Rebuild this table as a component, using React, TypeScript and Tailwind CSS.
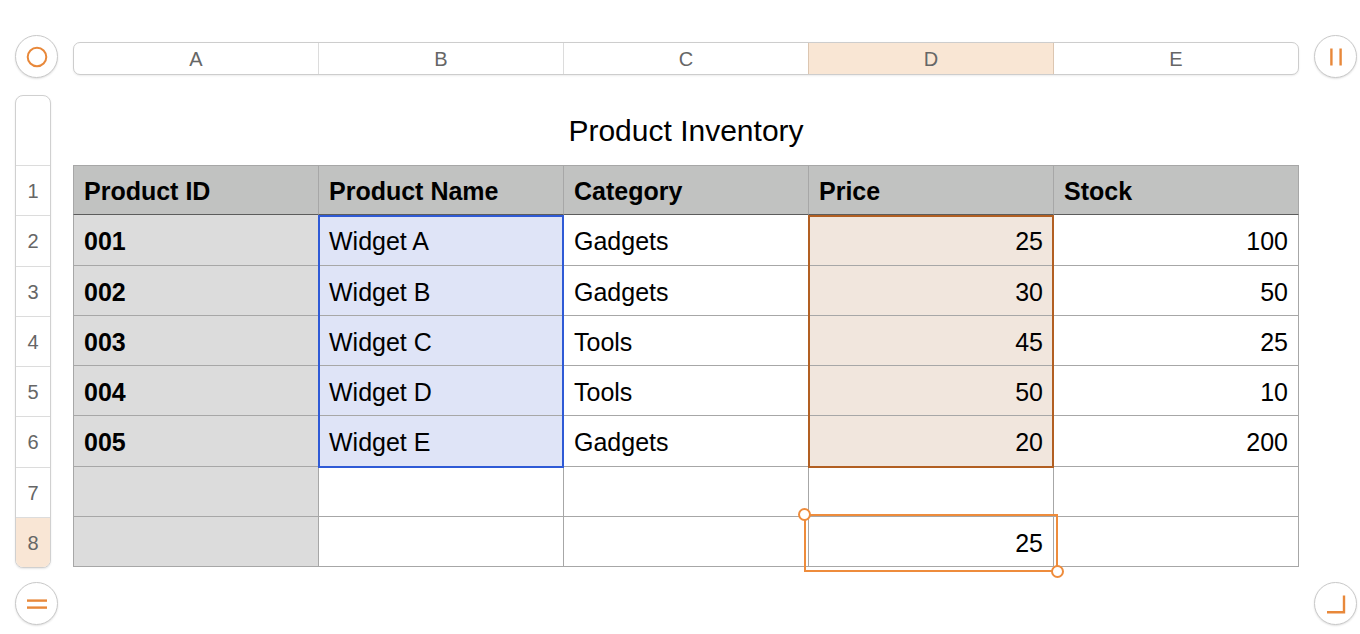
import React from "react";

const ORANGE = "#e8883a";

type Cell = string | number | null;

const data: Cell[][] = [
  ["Product ID", "Product Name", "Category", "Price", "Stock"],
  ["001", "Widget A", "Gadgets", 25, 100],
  ["002", "Widget B", "Gadgets", 30, 50],
  ["003", "Widget C", "Tools", 45, 25],
  ["004", "Widget D", "Tools", 50, 10],
  ["005", "Widget E", "Gadgets", 20, 200],
  [null, null, null, null, null],
  [null, null, null, 25, null],
];

const rowH = ["h-[50px]", "h-[51px]", "h-[50px]", "h-[50px]", "h-[50px]", "h-[51px]", "h-[50px]", "h-[50px]"];

function CircleButton({ children }: { children: React.ReactNode }) {
  return (
    <div className="w-[43px] h-[43px] rounded-full border border-[#c9c9c9] bg-white shadow-[0_1px_2px_rgba(0,0,0,0.12)] flex items-center justify-center shrink-0">
      {children}
    </div>
  );
}

function cellClass(r: number, c: number): string {
  const base = "border-r border-[#a7a7a7] flex items-center px-[10px] pt-[3px] text-[25px] text-black leading-none";
  let cls = base + (c === 0 ? " w-[246px] border-l" : " w-[245px]");
  if (r === 0) {
    cls += " bg-[#c1c2c1] font-bold border-b border-b-[#5c5c5c]";
  } else {
    cls += " border-b";
    if (c === 0) cls += " bg-[#dcdcdc] font-bold";
    else if (c === 1 && r <= 5) cls += " bg-[#dfe4f7] text-[#111]";
    else if (c === 3 && r <= 5) cls += " bg-[#f1e6dd]";
    else cls += " bg-white";
  }
  if (r > 0 && (c === 3 || c === 4)) cls += " justify-end";
  return cls;
}

export default function App() {
  const cols = ["A", "B", "C", "D", "E"];
  return (
    <div className="w-[1360px] h-[634px] bg-white font-['Liberation_Sans',Arial,sans-serif] overflow-hidden">
      {/* top row */}
      <div className="flex items-start pt-[35px] pl-[15px]">
        <CircleButton>
          <svg width="24" height="24" viewBox="0 0 24 24">
            <circle cx="12" cy="12" r="9.3" fill="none" stroke={ORANGE} strokeWidth="2" />
          </svg>
        </CircleButton>
        <div className="ml-[15px] mt-[7px] w-[1226px] h-[33px] rounded-[7px] border border-[#cdcdcd] bg-white shadow-[0_1px_2px_rgba(0,0,0,0.08)] flex overflow-hidden">
          {cols.map((l, i) => (
            <div
              key={l}
              className={
                "flex-1 flex items-center justify-center text-[20px] text-[#666] " +
                (i > 0 ? "border-l " : "") +
                (i === 3 ? "bg-[#f9e6d4] border-[#dcc6b1]" : i === 4 ? "border-[#dcc6b1]" : "border-[#dcdcdc]")
              }
            >
              {l}
            </div>
          ))}
        </div>
        <div className="ml-[15px]">
          <CircleButton>
            <svg width="24" height="24" viewBox="0 0 24 24">
              <rect x="6.2" y="3.5" width="2.4" height="17" fill={ORANGE} />
              <rect x="15.4" y="3.5" width="2.4" height="17" fill={ORANGE} />
            </svg>
          </CircleButton>
        </div>
      </div>

      {/* middle */}
      <div className="flex mt-[17px] pl-[15px]">
        <div className="w-[36px] rounded-[8px] border border-[#d0d0d0] overflow-hidden shadow-[0_1px_2px_rgba(0,0,0,0.1)] bg-white">
          <div className="h-[69px]" />
          {rowH.map((h, i) => (
            <div
              key={i}
              className={
                h +
                " border-t border-[#dcdcdc] flex items-center justify-center text-[20px] text-[#666] " +
                (i === 7 ? "bg-[#f9e6d5]" : "bg-white")
              }
            >
              {i + 1}
            </div>
          ))}
        </div>

        <div className="ml-[22px] w-[1226px]">
          <div className="h-[70px] flex items-center justify-center pt-[1px] text-[30px] text-black">
            Product Inventory
          </div>
          <div className="relative border-t border-[#a7a7a7]">
            {data.map((row, r) => (
              <div key={r} className={"flex " + (r === 0 ? "h-[49px]" : rowH[r])}>
                {row.map((cell, c) => (
                  <div key={c} className={cellClass(r, c)}>
                    {cell === null ? "" : String(cell)}
                  </div>
                ))}
              </div>
            ))}

            {/* selection overlays */}
            <div className="absolute left-[245px] top-[49px] w-[246px] h-[253px] border-2 border-[#2f5ad6] pointer-events-none" />
            <div className="absolute left-[735px] top-[49px] w-[246px] h-[253px] border-2 border-[#b25f22] pointer-events-none" />
            <div className="absolute left-[731px] top-[348px] w-[254px] h-[58px] border-2 border-[#ee8c3c] pointer-events-none" />
            <div className="absolute left-[725px] top-[342px] w-[13px] h-[13px] rounded-full border-2 border-[#ee8c3c] bg-white" />
            <div className="absolute left-[978px] top-[399px] w-[13px] h-[13px] rounded-full border-2 border-[#ee8c3c] bg-white" />
          </div>
        </div>
      </div>

      {/* bottom row */}
      <div className="flex justify-between mt-[14px] pl-[15px] pr-[3px]">
        <CircleButton>
          <svg width="24" height="24" viewBox="0 0 24 24">
            <rect x="2" y="7.4" width="20" height="2.4" fill={ORANGE} />
            <rect x="2" y="14.4" width="20" height="2.4" fill={ORANGE} />
          </svg>
        </CircleButton>
        <CircleButton>
          <svg width="24" height="24" viewBox="0 0 24 24">
            <path d="M20 3.5 V20.2 H3" fill="none" stroke={ORANGE} strokeWidth="2.4" />
          </svg>
        </CircleButton>
      </div>
    </div>
  );
}
